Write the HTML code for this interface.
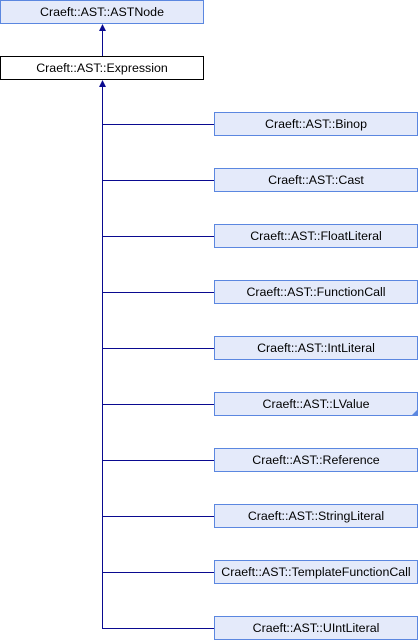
<!DOCTYPE html>
<html><head><style>
body{margin:0;width:418px;height:640px;background:#fff;position:relative;overflow:hidden;font-family:"Liberation Sans",sans-serif;}
.b{position:absolute;box-sizing:border-box;width:204px;height:24px;background:#e4eafa;border:1px solid #5b87e0;font-size:12.4px;line-height:22px;text-align:center;color:#000;white-space:nowrap;}
.w{background:#fff;border-color:#000;}
svg{position:absolute;left:0;top:0}
</style></head><body>
<svg width="418" height="640">
<g stroke="#0a0a90" stroke-width="1" fill="none">
<line x1="102.5" y1="26" x2="102.5" y2="56"/>
<line x1="102.5" y1="82" x2="102.5" y2="628.5"/>
<line x1="102" y1="124.5" x2="214" y2="124.5"/>
<line x1="102" y1="180.5" x2="214" y2="180.5"/>
<line x1="102" y1="236.5" x2="214" y2="236.5"/>
<line x1="102" y1="292.5" x2="214" y2="292.5"/>
<line x1="102" y1="348.5" x2="214" y2="348.5"/>
<line x1="102" y1="404.5" x2="214" y2="404.5"/>
<line x1="102" y1="460.5" x2="214" y2="460.5"/>
<line x1="102" y1="516.5" x2="214" y2="516.5"/>
<line x1="102" y1="572.5" x2="214" y2="572.5"/>
<line x1="102" y1="628.5" x2="214" y2="628.5"/>
</g>
<polygon points="102.5,24 99,31 106,31" fill="#0a0a90"/>
<polygon points="102.5,80 99,87 106,87" fill="#0a0a90"/>
</svg>
<div class="b" style="left:0px;top:0px">Craeft::AST::ASTNode</div>
<div class="b w" style="left:0px;top:56px">Craeft::AST::Expression</div>
<div class="b" style="left:214px;top:112px">Craeft::AST::Binop</div>
<div class="b" style="left:214px;top:168px">Craeft::AST::Cast</div>
<div class="b" style="left:214px;top:224px">Craeft::AST::FloatLiteral</div>
<div class="b" style="left:214px;top:280px">Craeft::AST::FunctionCall</div>
<div class="b" style="left:214px;top:336px">Craeft::AST::IntLiteral</div>
<div class="b" style="left:214px;top:392px">Craeft::AST::LValue<svg width="204" height="24" style="left:-1px;top:-1px"><polygon points="203,18 203,23 198,23" fill="#5b87e0"/></svg></div>
<div class="b" style="left:214px;top:448px">Craeft::AST::Reference</div>
<div class="b" style="left:214px;top:504px">Craeft::AST::StringLiteral</div>
<div class="b" style="left:214px;top:560px">Craeft::AST::TemplateFunctionCall</div>
<div class="b" style="left:214px;top:616px">Craeft::AST::UIntLiteral</div>
</body></html>
